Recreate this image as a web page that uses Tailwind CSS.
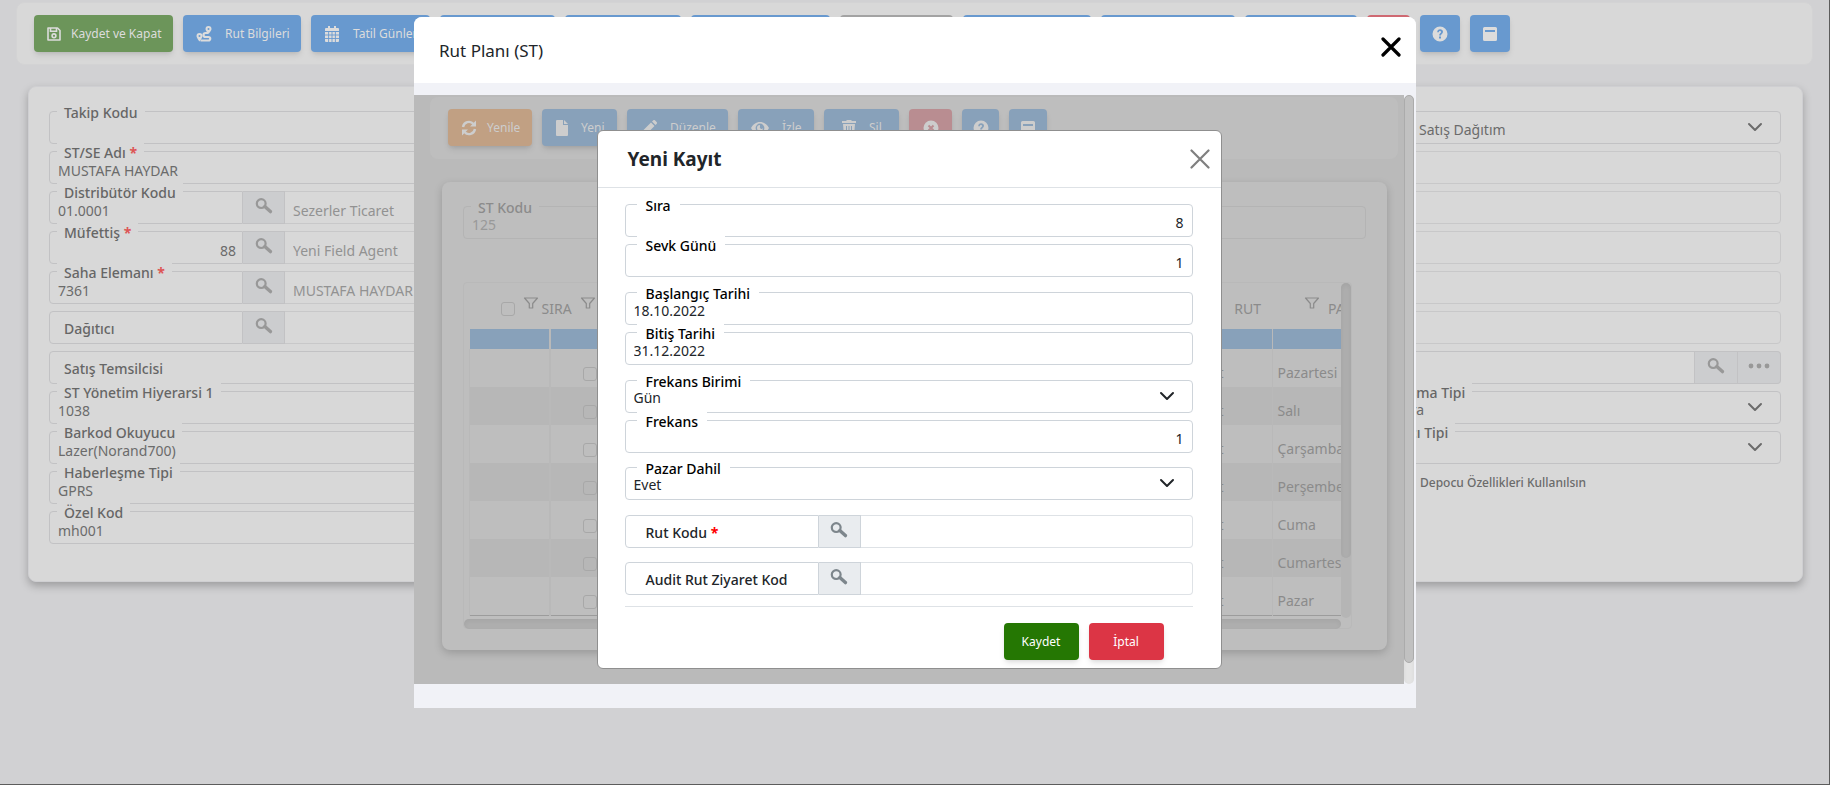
<!DOCTYPE html>
<html lang="tr">

<head>
  <meta charset="UTF-8">
  <meta name="viewport" content="width=device-width, initial-scale=1.0">
  <title>Rut Planı (ST)</title>
  <script src="https://cdn.jsdelivr.net/npm/@tailwindcss/browser@4"></script>
</head>

<body class="font-['Noto_Sans','Open_Sans',sans-serif] text-sm bg-[#d1d1d3]">

  <!-- Icons -->
  <svg class="hidden">
    <symbol id="i-search" viewBox="0 0 18 16">
      <circle cx="6.2" cy="5.6" r="4.4" fill="none" stroke="currentColor" stroke-width="2.2" />
      <path d="M9.8 8.6 15.4 13.6" stroke="currentColor" stroke-width="3.4" stroke-linecap="round" />
    </symbol>
    <symbol id="i-chevron" viewBox="0 0 16 16">
      <path d="m2 5 6 6 6-6" fill="none" stroke="currentColor" stroke-width="2" stroke-linecap="round" stroke-linejoin="round" />
    </symbol>
    <symbol id="i-help" viewBox="0 0 16 16">
      <path fill="currentColor" fill-rule="evenodd" d="M8 .5a7.5 7.5 0 1 0 0 15 7.5 7.5 0 0 0 0-15zM7 10.600h2v2H7zM5.200 6.200C5.200 4.300 6.400 3.300 8.100 3.300c1.700 0 2.900 1 2.900 2.500 0 2-2 2.100-2 3.700H7.200c0-2.500 1.900-2.500 1.900-3.600 0-.6-.4-.9-1.100-.9-.7 0-1.100.4-1.100 1.200z" />
    </symbol>
    <symbol id="i-window" viewBox="0 0 16 16">
      <path fill="currentColor" fill-rule="evenodd" d="M2.500 1h11A1.500 1.500 0 0 1 15 2.500v11a1.500 1.500 0 0 1-1.500 1.500h-11A1.500 1.500 0 0 1 1 13.500v-11A1.500 1.500 0 0 1 2.500 1zM3 4v2h10V4z" />
    </symbol>
    <symbol id="i-funnel" viewBox="0 0 16 12">
      <path d="M1.500 1h13L9.700 6.500v4.500H6.300V6.500z" fill="none" stroke="currentColor" stroke-width="1.200" stroke-linejoin="round" />
    </symbol>
  </svg>

  <div class="min-h-screen border-r border-b border-[#5c5c5c] pt-[2px]">

    <!-- Toolbar -->
    <div class="mx-4 flex gap-[10px] rounded-lg border border-[#d3d3d4] bg-[#d8d8d8] px-[17px] py-3 text-xs text-[#dcdcdc]">
      <button class="flex h-[37px] w-[139px] shrink-0 items-center gap-[10px] rounded bg-[#6c955a] pl-[13px] whitespace-nowrap shadow-md">
        <svg class="size-[14px]" viewBox="0 0 14 14" fill="none" stroke="currentColor" stroke-width="1.600"><path d="M1 1h9.500L13 3.500V13H1z" stroke-linejoin="round" /><path d="M3.500 1v3.200h6V1" /><circle cx="7" cy="8.800" r="1.900" /></svg>
        Kaydet ve Kapat</button>
      <button class="flex h-[37px] w-[118px] shrink-0 items-center gap-[13px] rounded bg-[#6899cf] pl-[13px] whitespace-nowrap shadow-md">
        <svg class="size-4" viewBox="0 0 16 16" fill="currentColor"><path fill-rule="evenodd" d="M12.500 0a3 3 0 0 0-3 3c0 1.700 3 5 3 5s3-3.300 3-5a3 3 0 0 0-3-3zm0 2a1 1 0 1 1 0 2 1 1 0 0 1 0-2zM3.500 7a3 3 0 0 0-3 3c0 1.700 3 5.500 3 5.500s3-3.800 3-5.500a3 3 0 0 0-3-3zm0 2a1 1 0 1 1 0 2 1 1 0 0 1 0-2z" /><path d="M12 7H9.500a2 2 0 0 0 0 4h3a1.700 1.700 0 0 1 0 3.500H4.500" fill="none" stroke="currentColor" stroke-width="2.200" /></svg>
        Rut Bilgileri</button>
      <button class="flex h-[37px] w-[119px] shrink-0 items-center gap-[13px] rounded bg-[#6899cf] pl-[13px] whitespace-nowrap shadow-md">
        <svg class="size-4" viewBox="0 0 16 16"><path fill="currentColor" d="M4 0h2v2h4V0h2v2h2a1 1 0 0 1 1 1v2H1V3a1 1 0 0 1 1-1h2zM1 6h14v9a1 1 0 0 1-1 1H2a1 1 0 0 1-1-1z" /><path d="M4.600 6v10M8 6v10M11.400 6v10M1 9h14M1 12.500h14" stroke="#6899cf" stroke-width=".9" /></svg>
        Tatil Günleri</button>
      <button aria-label="Araç" class="h-[37px] w-[115px] shrink-0 rounded bg-[#6899cf]"></button>
      <button aria-label="Araç" class="h-[37px] w-[116px] shrink-0 rounded bg-[#6899cf]"></button>
      <button aria-label="Araç" class="h-[37px] w-[139px] shrink-0 rounded bg-[#6899cf]"></button>
      <button aria-label="Araç" class="h-[37px] w-[113px] shrink-0 rounded bg-[#a3a3a3]"></button>
      <button aria-label="Araç" class="h-[37px] w-[128px] shrink-0 rounded bg-[#6899cf]"></button>
      <button aria-label="Araç" class="h-[37px] w-[134px] shrink-0 rounded bg-[#6899cf]"></button>
      <button aria-label="Araç" class="h-[37px] w-[112px] shrink-0 rounded bg-[#6899cf]"></button>
      <button aria-label="Kapat" class="h-[37px] w-[43px] shrink-0 rounded bg-[#cf6972]"></button>
      <button aria-label="Yardım" class="flex h-[37px] w-[40px] shrink-0 items-center justify-center rounded bg-[#6899cf] shadow-md"><svg class="size-4"><use href="#i-help" /></svg></button>
      <button aria-label="Pencere" class="flex h-[37px] w-[40px] shrink-0 items-center justify-center rounded bg-[#6899cf] shadow-md"><svg class="size-4"><use href="#i-window" /></svg></button>
    </div>

    <!-- Form card -->
    <div class="mt-[21px] mr-[26px] ml-7 flex justify-between rounded-lg border border-[#cfcfd2] bg-[#d8d8d8] pt-6 pr-[21px] pb-[37px] pl-5 text-[#6b6b6b] shadow-[0_4px_8px_rgba(0,0,0,0.25)]">
      <div class="flex w-2/5 flex-col gap-[7px]">
        <div class="relative">
          <label for="takip" class="absolute -top-2 left-2 bg-[#d8d8d8] px-[7px] leading-5 font-medium text-[#666]">Takip Kodu</label>
          <input id="takip" class="block h-[33px] w-full rounded border border-[#c2c2c4] px-2 pt-[5px]">
        </div>
        <div class="relative">
          <label for="stse" class="absolute -top-2 left-2 bg-[#d8d8d8] px-[7px] leading-5 font-medium text-[#666]">ST/SE Adı <b class="text-[#dd5555]">*</b></label>
          <input id="stse" value="MUSTAFA HAYDAR" class="block h-[33px] w-full rounded border border-[#c2c2c4] px-2 pt-[5px]">
        </div>
        <div class="relative flex">
          <label for="dist" class="absolute -top-2 left-2 bg-[#d8d8d8] px-[7px] leading-5 font-medium text-[#666]">Distribütör Kodu</label>
          <input id="dist" value="01.0001" class="h-[33px] w-[194px] rounded-l border border-[#c2c2c4] px-2 pt-[5px]">
          <button aria-label="Ara" class="flex w-[42px] justify-center border-y border-r border-[#c2c2c4] bg-[#cccdcf] pt-[6px] text-[#989898]"><svg class="h-4 w-[18px]"><use href="#i-search" /></svg></button>
          <input aria-label="Distribütör" value="Sezerler Ticaret" class="h-[33px] grow border-y border-r border-[#c8c8c9] px-2 pt-[5px] text-[#929292]" readonly>
        </div>
        <div class="relative flex">
          <label for="mufettis" class="absolute -top-2 left-2 bg-[#d8d8d8] px-[7px] leading-5 font-medium text-[#666]">Müfettiş <b class="text-[#dd5555]">*</b></label>
          <input id="mufettis" value="88" class="h-[33px] w-[194px] rounded-l border border-[#c2c2c4] px-[6px] pt-[5px] text-right">
          <button aria-label="Ara" class="flex w-[42px] justify-center border-y border-r border-[#c2c2c4] bg-[#cccdcf] pt-[6px] text-[#989898]"><svg class="h-4 w-[18px]"><use href="#i-search" /></svg></button>
          <input aria-label="Müfettiş adı" value="Yeni Field Agent" class="h-[33px] grow border-y border-r border-[#c8c8c9] px-2 pt-[5px] text-[#929292]" readonly>
        </div>
        <div class="relative flex">
          <label for="saha" class="absolute -top-2 left-2 bg-[#d8d8d8] px-[7px] leading-5 font-medium text-[#666]">Saha Elemanı <b class="text-[#dd5555]">*</b></label>
          <input id="saha" value="7361" class="h-[33px] w-[194px] rounded-l border border-[#c2c2c4] px-2 pt-[5px]">
          <button aria-label="Ara" class="flex w-[42px] justify-center border-y border-r border-[#c2c2c4] bg-[#cccdcf] pt-[6px] text-[#989898]"><svg class="h-4 w-[18px]"><use href="#i-search" /></svg></button>
          <input aria-label="Saha elemanı adı" value="MUSTAFA HAYDAR" class="h-[33px] grow border-y border-r border-[#c8c8c9] px-2 pt-[5px] text-[#929292]" readonly>
        </div>
        <div class="relative flex">
          <label for="dagitici" class="absolute top-2 left-2 px-[7px] leading-5 font-medium text-[#666]">Dağıtıcı</label>
          <input id="dagitici" class="h-[33px] w-[194px] rounded-l border border-[#c2c2c4] px-2 pt-[5px]">
          <button aria-label="Ara" class="flex w-[42px] justify-center border-y border-r border-[#c2c2c4] bg-[#cccdcf] pt-[6px] text-[#989898]"><svg class="h-4 w-[18px]"><use href="#i-search" /></svg></button>
          <input aria-label="Dağıtıcı adı" class="h-[33px] grow border-y border-r border-[#c8c8c9] px-2 pt-[5px]" readonly>
        </div>
        <div class="relative">
          <label for="temsilci" class="absolute top-2 left-2 px-[7px] leading-5 font-medium text-[#666]">Satış Temsilcisi</label>
          <input id="temsilci" class="block h-[33px] w-full rounded border border-[#c2c2c4] px-2 pt-[5px]">
        </div>
        <div class="relative">
          <label for="hiyerarsi" class="absolute -top-2 left-2 bg-[#d8d8d8] px-[7px] leading-5 font-medium text-[#666]">ST Yönetim Hiyerarsi 1</label>
          <input id="hiyerarsi" value="1038" class="block h-[33px] w-full rounded border border-[#c2c2c4] px-2 pt-[5px]">
        </div>
        <div class="relative">
          <label for="barkod" class="absolute -top-2 left-2 bg-[#d8d8d8] px-[7px] leading-5 font-medium text-[#666]">Barkod Okuyucu</label>
          <input id="barkod" value="Lazer(Norand700)" class="block h-[33px] w-full rounded border border-[#c2c2c4] px-2 pt-[5px]">
        </div>
        <div class="relative">
          <label for="haberlesme" class="absolute -top-2 left-2 bg-[#d8d8d8] px-[7px] leading-5 font-medium text-[#666]">Haberleşme Tipi</label>
          <input id="haberlesme" value="GPRS" class="block h-[33px] w-full rounded border border-[#c2c2c4] px-2 pt-[5px]">
        </div>
        <div class="relative">
          <label for="ozel" class="absolute -top-2 left-2 bg-[#d8d8d8] px-[7px] leading-5 font-medium text-[#666]">Özel Kod</label>
          <input id="ozel" value="mh001" class="block h-[33px] w-full rounded border border-[#c2c2c4] px-2 pt-[5px]">
        </div>
      </div>

      <div class="flex w-[411px] flex-col gap-[7px]">
        <div class="relative">
          <select aria-label="Satış şekli" class="block h-[33px] w-full appearance-none rounded border border-[#c2c2c4] px-[11px] pt-1">
            <option>Sıcak Satış Dağıtım</option>
          </select>
          <svg class="pointer-events-none absolute top-2 right-[18px] size-4"><use href="#i-chevron" /></svg>
        </div>
        <input aria-label="Alan 1" class="h-[33px] rounded border border-[#c8c8c9] px-2">
        <input aria-label="Alan 2" class="h-[33px] rounded border border-[#c8c8c9] px-2">
        <input aria-label="Alan 3" class="h-[33px] rounded border border-[#c8c8c9] px-2">
        <input aria-label="Alan 4" class="h-[33px] rounded border border-[#c8c8c9] px-2">
        <input aria-label="Alan 5" class="h-[33px] rounded border border-[#c8c8c9] px-2">
        <div class="flex">
          <input aria-label="Alan 6" class="h-[33px] grow border border-[#c2c2c4] px-2">
          <button aria-label="Ara" class="flex w-[43px] justify-center border-y border-r border-[#c2c2c4] bg-[#cccdcf] pt-[6px] text-[#989898]"><svg class="h-4 w-[18px]"><use href="#i-search" /></svg></button>
          <button aria-label="Diğer" class="flex w-[43px] justify-center rounded-r border-y border-r border-[#c2c2c4] bg-[#cccdcf] pt-[6px] text-[#989898]">
            <svg class="h-4 w-[22px]" viewBox="0 0 22 16" fill="currentColor"><circle cx="3" cy="8" r="2.400" /><circle cx="11" cy="8" r="2.400" /><circle cx="19" cy="8" r="2.400" /></svg>
          </button>
        </div>
        <div class="relative">
          <label for="calisma" class="absolute -top-2 left-2 bg-[#d8d8d8] px-[7px] leading-5 font-medium text-[#666]">Çalışma Tipi</label>
          <select id="calisma" class="block h-[33px] w-full appearance-none rounded border border-[#c2c2c4] px-[11px] pt-1">
            <option>Fatura</option>
          </select>
          <svg class="pointer-events-none absolute top-2 right-[18px] size-4"><use href="#i-chevron" /></svg>
        </div>
        <div class="relative">
          <label for="satici" class="absolute -top-2 left-2 bg-[#d8d8d8] px-[7px] leading-5 font-medium text-[#666]">Satıcı Tipi</label>
          <select id="satici" class="block h-[33px] w-full appearance-none rounded border border-[#c2c2c4] px-[11px] pt-1">
            <option></option>
          </select>
          <svg class="pointer-events-none absolute top-2 right-[18px] size-4"><use href="#i-chevron" /></svg>
        </div>
        <label class="flex items-center gap-2 pt-[2px] pl-7 text-xs leading-5 font-medium"><input type="checkbox" class="size-[14px]">Depocu Özellikleri Kullanılsın</label>
      </div>
    </div>
  </div>

  <!-- Rut Planı modal -->
  <div class="fixed inset-x-0 top-[17px] flex justify-center">
    <div class="w-[1002px] rounded-t-lg bg-[#f1f2f7]">
      <div class="flex h-[66px] items-center justify-between rounded-t-lg bg-white pr-[15px] pl-[25px]">
        <h1 class="pt-[2px] text-[17px] text-[#212529]">Rut Planı (ST)</h1>
        <button aria-label="Kapat" class="pb-[6px]"><svg class="size-5" viewBox="0 0 20 20"><path d="m2 2 16 16M18 2 2 18" stroke="#000" stroke-width="3.200" stroke-linecap="round" /></svg></button>
      </div>

      <div class="mt-3 mb-6 flex h-[589px]">
        <div class="relative grow bg-[#bababa] pt-[2px]">
          <div class="mr-[6px] ml-4 flex h-[62px] gap-[10px] rounded-lg bg-[#bebebe] px-[18px] pt-3 text-xs text-[#cdcdcd]">
            <button class="flex h-[37px] w-[84px] items-center gap-[10px] rounded bg-[#c1a083] pl-[13px] shadow-md">
              <svg class="size-4" viewBox="0 0 16 16" fill="none" stroke="currentColor" stroke-width="2.400"><path d="M2 7a6 6 0 0 1 10.500-3M14 9a6 6 0 0 1-10.500 3" /><path d="M15 .5V6.500H9zM1 15.500V9.500h6z" fill="currentColor" stroke="none" /></svg>
              Yenile</button>
            <button class="flex h-[37px] w-[75px] items-center gap-[13px] rounded bg-[#88a1ba] pl-[14px] shadow-md">
              <svg class="h-4 w-3" viewBox="0 0 12 16" fill="currentColor"><path d="M1 0h6v5h5v10a1 1 0 0 1-1 1H1a1 1 0 0 1-1-1V1a1 1 0 0 1 1-1zm7 0 4 4H8z" /></svg>
              Yeni</button>
            <button class="flex h-[37px] w-[101px] items-center gap-[13px] rounded bg-[#88a1ba] pl-[14px] shadow-md">
              <svg class="size-4" viewBox="0 0 16 16" fill="currentColor"><path d="M0 16l1-4.500 9-9 3.500 3.500-9 9zM11 1.500 12.100.4a1.400 1.400 0 0 1 2 0l1.500 1.500a1.400 1.400 0 0 1 0 2L14.500 5z" /></svg>
              Düzenle</button>
            <button class="flex h-[37px] w-[76px] items-center gap-[13px] rounded bg-[#88a1ba] pl-[13px] shadow-md">
              <svg class="h-4 w-[18px]" viewBox="0 0 18 16" fill="currentColor"><path fill-rule="evenodd" d="M9 2C5 2 2 4.500 0 8c2 3.500 5 6 9 6s7-2.500 9-6c-2-3.500-5-6-9-6zm0 1.600a4.400 4.400 0 1 1 0 8.800 4.400 4.400 0 0 1 0-8.800zM9 5a3 3 0 1 0 3 3A1.500 1.500 0 0 1 9 6.500z" /></svg>
              İzle</button>
            <button class="flex h-[37px] w-[75px] items-center gap-[13px] rounded bg-[#88a1ba] pl-[18px] shadow-md">
              <svg class="h-4 w-[14px]" viewBox="0 0 14 16" fill="currentColor"><path fill-rule="evenodd" d="M5 0h4l1 1h4v2H0V1h4zM1 4h12l-1 12H2zm3 2v8h1V6zm2.500 0v8h1V6zM9 6v8h1V6z" /></svg>
              Sil</button>
            <button aria-label="İptal" class="flex h-[37px] w-[43px] items-center justify-center rounded bg-[#b98d91] shadow-md"><svg class="size-4" viewBox="0 0 16 16"><circle cx="8" cy="8" r="7.500" fill="currentColor" /><path d="m5.500 5.500 5 5m0-5-5 5" stroke="#b98d91" stroke-width="2" /></svg></button>
            <button aria-label="Yardım" class="flex h-[37px] w-[37px] items-center justify-center rounded bg-[#88a1ba] shadow-md"><svg class="size-4"><use href="#i-help" /></svg></button>
            <button aria-label="Pencere" class="flex h-[37px] w-[38px] items-center justify-center rounded bg-[#88a1ba] shadow-md"><svg class="size-4"><use href="#i-window" /></svg></button>
          </div>

          <div class="mt-[23px] mr-[17px] ml-7 h-[468px] rounded-lg bg-[#bebebe] px-[21px] pt-6 text-[#8b8b8b] shadow-[0_3px_8px_rgba(0,0,0,0.18)]">
            <div class="relative">
              <label for="stkodu" class="absolute -top-2 left-2 bg-[#bebebe] px-[7px] leading-5 font-medium">ST Kodu</label>
              <input id="stkodu" value="125" class="block h-[33px] w-full rounded border border-[#b4b4b4] px-2 pt-1 text-[#999]" readonly>
            </div>

            <!-- Grid -->
            <div class="mt-[43px] mr-[14px] flex h-[347px] rounded border border-[#b9b9b9]">
              <div class="min-w-0 grow">
                <div class="overflow-hidden pl-[5px]">
                  <table class="w-full table-fixed border-collapse border-b border-[#9c9c9c]">
                    <colgroup><col class="w-[80px]"><col class="w-[80px]"><col><col class="w-[172px]"><col class="w-[69px]"></colgroup>
                    <thead>
                      <tr class="h-[46px] text-left">
                        <th colspan="2" class="font-normal">
                          <div class="flex items-center pt-[6px] pl-[31px]">
                            <input type="checkbox" aria-label="Tümünü seç" class="size-[14px] appearance-none rounded-[3px] border border-[#a8a8a8]">
                            <svg class="mb-3 ml-2 h-3 w-4"><use href="#i-funnel" /></svg>
                            <span class="ml-[3px]">SIRA</span>
                            <svg class="mb-3 ml-2 h-3 w-4"><use href="#i-funnel" /></svg>
                          </div>
                        </th>
                        <th></th>
                        <th class="pt-[6px] pr-[11px] text-right font-normal">RUT</th>
                        <th class="font-normal">
                          <div class="flex items-center pt-[6px] pl-8">
                            <svg class="mb-3 h-3 w-4 shrink-0"><use href="#i-funnel" /></svg>
                            <span class="ml-2">PAZAR</span>
                          </div>
                        </th>
                      </tr>
                      <tr class="h-[20px] bg-[#88a1ba]">
                        <td class="border-r-2 border-[#b9b9b9]"></td><td></td><td></td><td class="border-r border-[#b9b9b9]"></td><td></td>
                      </tr>
                    </thead>
                    <tbody id="rows"></tbody>
                  </table>
                </div>
                <div class="mt-[3px] h-[10px] rounded-full bg-[#aeaeae] shadow-inner"></div>
              </div>
              <div class="h-[335px] w-[10px] shrink-0 rounded-full bg-[#b5b5b5]"><div class="h-[275px] rounded-full bg-[#adadad] shadow-inner"></div></div>
            </div>
          </div>

          <!-- Yeni Kayıt modal -->
          <div class="absolute inset-x-0 top-[35px] flex justify-center">
            <div class="w-[625px] rounded-md border border-[#8f8f8f] bg-white text-[#212529]">
              <div class="flex h-[57px] items-center justify-between border-b border-[#dee2e6] pr-[11px] pl-[30px]">
                <h2 class="pt-[2px] text-[19px] font-bold">Yeni Kayıt</h2>
                <button aria-label="Kapat"><svg class="size-5" viewBox="0 0 20 20"><path d="m1.500 1.500 17 17M18.500 1.500l-17 17" stroke="#7f7f7f" stroke-width="2.200" stroke-linecap="round" /></svg></button>
              </div>
              <div class="pt-4 pr-7 pb-2 pl-[27px]">
                <div class="flex flex-col gap-[7px]">
                  <div class="relative">
                    <label for="sira" class="absolute -top-2 left-3 bg-white px-[9px] leading-5 font-medium text-black">Sıra</label>
                    <input id="sira" value="8" class="block h-[33px] w-full rounded border border-[#ced4da] px-2 pt-1 text-right">
                  </div>
                  <div class="relative">
                    <label for="sevk" class="absolute -top-2 left-3 bg-white px-[9px] leading-5 font-medium text-black">Sevk Günü</label>
                    <input id="sevk" value="1" class="block h-[33px] w-full rounded border border-[#ced4da] px-2 pt-1 text-right">
                  </div>
                </div>
                <div class="mt-[15px] flex flex-col gap-[7px]">
                  <div class="relative">
                    <label for="baslangic" class="absolute -top-2 left-3 bg-white px-[9px] leading-5 font-medium text-black">Başlangıç Tarihi</label>
                    <input id="baslangic" value="18.10.2022" class="block h-[33px] w-full rounded border border-[#ced4da] px-2 pt-1">
                  </div>
                  <div class="relative">
                    <label for="bitis" class="absolute -top-2 left-3 bg-white px-[9px] leading-5 font-medium text-black">Bitiş Tarihi</label>
                    <input id="bitis" value="31.12.2022" class="block h-[33px] w-full rounded border border-[#ced4da] px-2 pt-1">
                  </div>
                </div>
                <div class="mt-[15px] flex flex-col gap-[7px]">
                  <div class="relative">
                    <label for="birim" class="absolute -top-2 left-3 bg-white px-[9px] leading-5 font-medium text-black">Frekans Birimi</label>
                    <select id="birim" class="block h-[33px] w-full appearance-none rounded border border-[#ced4da] px-2 pt-[2px]">
                      <option>Gün</option>
                    </select>
                    <svg class="pointer-events-none absolute top-2 right-[18px] size-4"><use href="#i-chevron" /></svg>
                  </div>
                  <div class="relative">
                    <label for="frekans" class="absolute -top-2 left-3 bg-white px-[9px] leading-5 font-medium text-black">Frekans</label>
                    <input id="frekans" value="1" class="block h-[33px] w-full rounded border border-[#ced4da] px-2 pt-1 text-right">
                  </div>
                </div>
                <div class="relative mt-[14px]">
                  <label for="pazar" class="absolute -top-2 left-3 bg-white px-[9px] leading-5 font-medium text-black">Pazar Dahil</label>
                  <select id="pazar" class="block h-[33px] w-full appearance-none rounded border border-[#ced4da] px-2 pt-[2px]">
                    <option>Evet</option>
                  </select>
                  <svg class="pointer-events-none absolute top-2 right-[18px] size-4"><use href="#i-chevron" /></svg>
                </div>
                <div class="relative mt-[15px] flex">
                  <label for="rutkodu" class="absolute top-2 left-3 px-[9px] leading-5 font-medium">Rut Kodu <b class="text-[#ff0000]">*</b></label>
                  <input id="rutkodu" class="h-[33px] w-[194px] rounded-l border border-[#ced4da] px-2 pt-1">
                  <button aria-label="Ara" class="flex w-[42px] justify-center border-y border-r border-[#ced4da] bg-[#e9ecef] pt-[6px] text-[#7d868c]"><svg class="h-4 w-[18px]"><use href="#i-search" /></svg></button>
                  <input aria-label="Rut adı" class="h-[33px] grow rounded-r border-y border-r border-[#dee2e6] px-2 pt-1">
                </div>
                <div class="relative mt-[14px] flex">
                  <label for="audit" class="absolute top-2 left-3 px-[9px] leading-5 font-medium">Audit Rut Ziyaret Kod</label>
                  <input id="audit" class="h-[33px] w-[194px] rounded-l border border-[#ced4da] px-2 pt-1">
                  <button aria-label="Ara" class="flex w-[42px] justify-center border-y border-r border-[#ced4da] bg-[#e9ecef] pt-[6px] text-[#7d868c]"><svg class="h-4 w-[18px]"><use href="#i-search" /></svg></button>
                  <input aria-label="Audit rut adı" class="h-[33px] grow rounded-r border-y border-r border-[#dee2e6] px-2 pt-1">
                </div>
                <div class="mt-[11px] flex justify-end gap-[10px] border-t border-[#dee2e6] pt-4 pr-[29px] text-xs text-white">
                  <button class="h-[37px] w-[75px] rounded bg-[#257703] shadow-md">Kaydet</button>
                  <button class="h-[37px] w-[75px] rounded bg-[#dc3545] shadow-md">İptal</button>
                </div>
              </div>
            </div>
          </div>
        </div>
        <div class="mr-[2px] w-[10px] shrink-0 rounded-full bg-[#e4e4e4] shadow-inner"><div class="h-[568px] rounded-full border border-[#ababab] bg-[#c1c1c1]"></div></div>
      </div>
    </div>
  </div>

  <script>
    const days = ["Pazartesi", "Salı", "Çarşamba", "Perşembe", "Cuma", "Cumartesi", "Pazar"]
    const rows = document.getElementById("rows")
    for (let i = 0; i < days.length; i++) {
      rows.innerHTML += `
      <tr class="h-[38px] even:bg-[#b7b7b7]">
        <td class="border-r-2 border-l border-[#b9b9b9]"></td>
        <td class="pt-3 pl-8"><input type="checkbox" aria-label="${days[i]} seç" class="block size-[14px] appearance-none rounded-[3px] border border-[#a8a8a8]"></td>
        <td></td>
        <td class="border-r border-[#b9b9b9] pt-[10px] pr-12 text-right">Rut</td>
        <td class="overflow-hidden pt-[10px] pl-[5px] whitespace-nowrap">${days[i]}</td>
      </tr>`
    }
  </script>
</body>

</html>
